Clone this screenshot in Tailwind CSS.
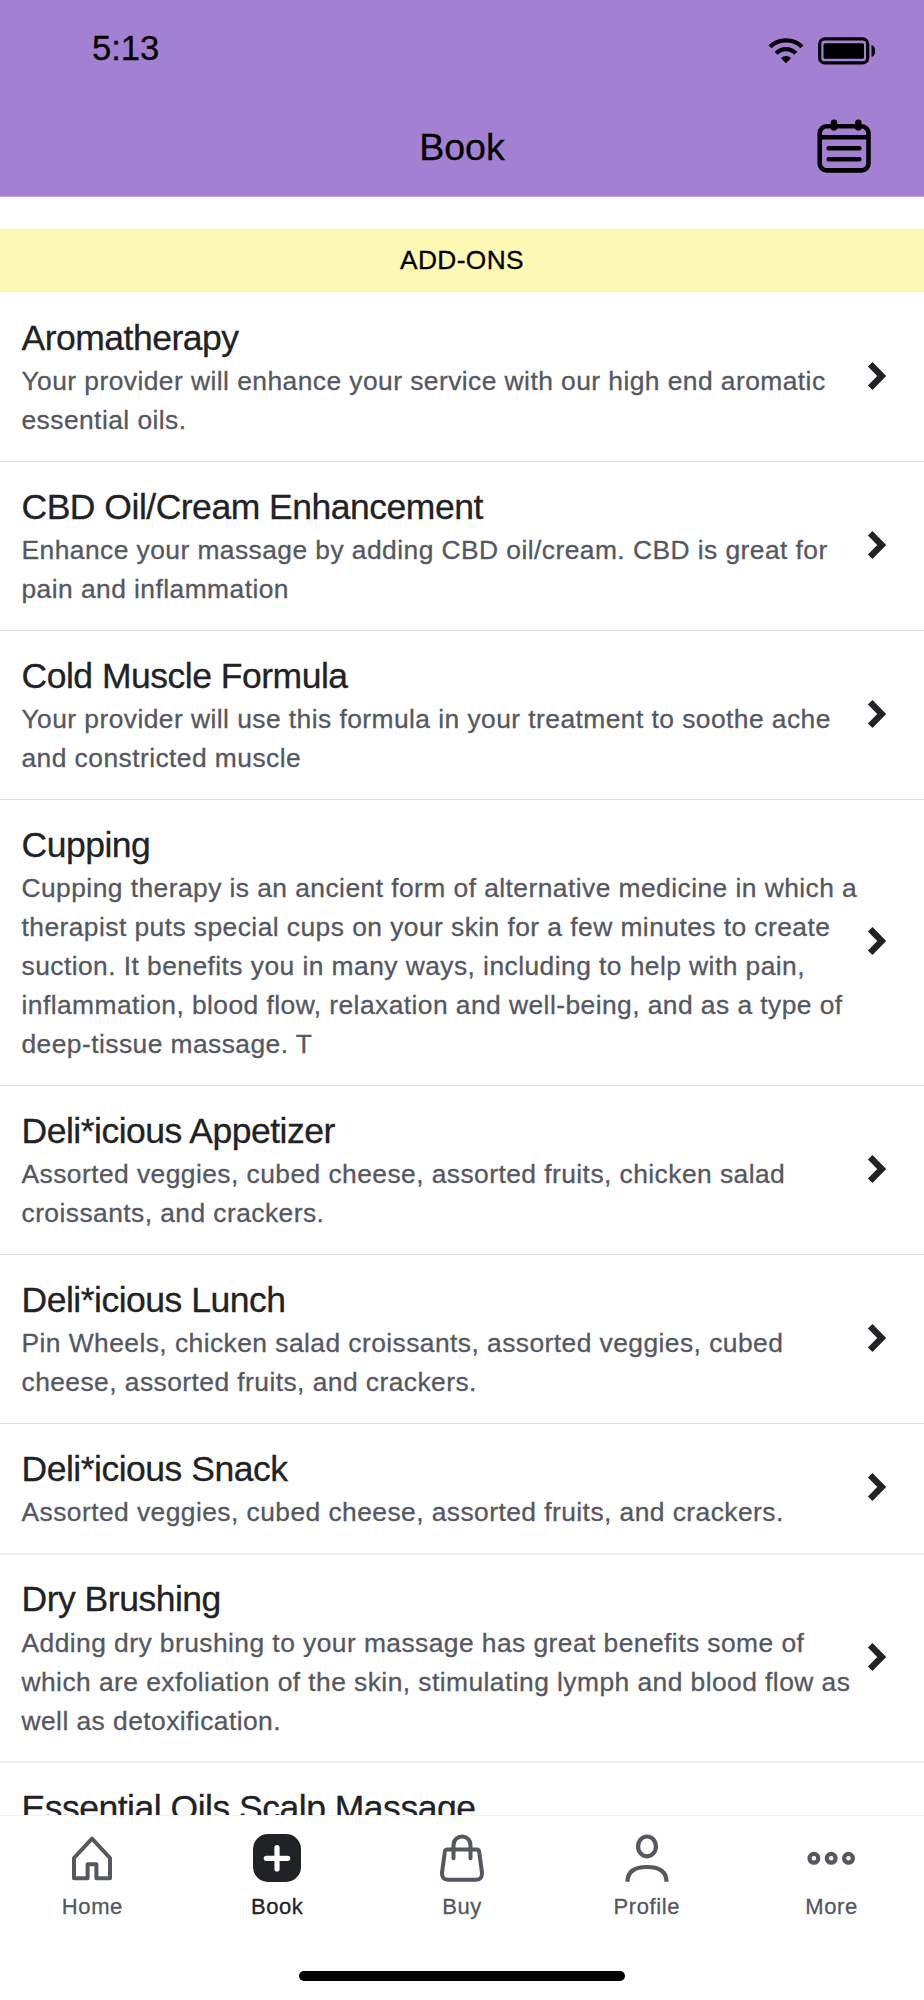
<!DOCTYPE html>
<html lang="en">
<head>
    <meta charset="UTF-8">
    <meta name="viewport" content="width=device-width, initial-scale=1.0">
    <title>Book</title>
    <script src="https://cdn.jsdelivr.net/npm/@tailwindcss/browser@4"></script>
</head>
<body class="bg-white font-['Liberation_Sans',Arial,sans-serif] text-[#212226] [-webkit-text-stroke:0.3px]">
    <div class="flex flex-col w-[924px] h-[2000px] overflow-hidden">
        <header class="shrink-0 h-[197px] bg-[#a480d2] border-b border-[#bfa5e0] text-black">
            <!-- Status bar -->
            <div class="flex items-center justify-between h-[98px] pl-[92px] pr-[48px]">
                <span class="pb-[3px] text-[34.6px] leading-10">5:13</span>
                <div class="flex items-center gap-[13.7px] pt-[3px]">
                    <svg width="36" height="28" viewBox="0 0 36 28" fill="none" stroke="#000" stroke-width="4.2">
                        <path d="M2 9.8C10.5 1.2 25.5 1.2 34 9.8" />
                        <path d="M8.2 16.4C13.6 10.8 22.4 10.8 27.8 16.4" />
                        <path d="M13 21.3C15.8 18.3 20.2 18.3 23 21.3L18 26.3Z" fill="#000" stroke="none" />
                    </svg>
                    <svg width="58" height="28" viewBox="0 0 58 28" fill="none">
                        <rect x="1.7" y="1.9" width="48" height="24" rx="5" stroke="#000" stroke-width="3.2" />
                        <rect x="5.5" y="6.2" width="40.5" height="15.5" rx="1.5" fill="#000" />
                        <path d="M53.5 8C58.4 9 58.4 19 53.5 20Z" fill="#000" />
                    </svg>
                </div>
            </div>
            <!-- Title bar -->
            <div class="grid grid-cols-3 items-center h-[98px] px-[52px]">
                <span></span>
                <h1 class="text-center text-[37.6px] leading-[44px]">Book</h1>
                <svg class="justify-self-end" width="56" height="56" viewBox="0 0 56 56" fill="none" stroke="#000" stroke-width="4.6" stroke-linecap="round">
                    <rect x="3.7" y="7.3" width="48.8" height="44.1" rx="7" />
                    <path d="M5 18.3H51" />
                    <path d="M12.7 29.3H43.3M12.7 40.3H43.3" />
                    <path d="M18 3.6V8.4M42.3 3.6V8.4" stroke-width="6.4" />
                </svg>
            </div>
        </header>

        <main class="flex-1 min-h-0 overflow-hidden pt-8">
            <h2 class="flex items-center justify-center h-[63px] bg-[#fef8b5] text-black text-[26.3px] tracking-[0.4px]">ADD-ONS</h2>
            <ul id="services" class="pt-px"></ul>
        </main>

        <nav class="shrink-0 h-[185px] border-t border-[#f2f2f3] text-[#555761] text-[22px] tracking-[0.6px] [font-variant-ligatures:none]">
            <div class="grid grid-cols-5 pt-[16.5px]">
                <a class="flex flex-col items-center gap-[12px]">
                    <svg width="50" height="50" viewBox="0 0 50 50" fill="none" stroke="currentColor" stroke-width="4" stroke-linejoin="round">
                        <path d="M25 5.7L43 25V45.3H29.4V31.2H20.6V45.3H7V25Z" />
                    </svg>
                    <span class="leading-6">Home</span>
                </a>
                <a class="flex flex-col items-center gap-[12px] text-[#212226]">
                    <svg width="50" height="50" viewBox="0 0 50 50" fill="none">
                        <rect x="1" y="1" width="48" height="48" rx="15" fill="currentColor" />
                        <path d="M25 14.6V36M14.3 25.3H35.7" stroke="#fff" stroke-width="5.2" stroke-linecap="round" />
                    </svg>
                    <span class="leading-6">Book</span>
                </a>
                <a class="flex flex-col items-center gap-[12px]">
                    <svg width="50" height="50" viewBox="0 0 50 50" fill="none" stroke="currentColor" stroke-width="4" stroke-linecap="round" stroke-linejoin="round">
                        <path d="M10.5 16.5H39.5Q41.9 16.5 42.2 18.9L45 39.7Q45.4 46.7 39 46.7H11Q4.6 46.7 5 39.7L7.8 18.9Q8.1 16.5 10.5 16.5Z" />
                        <path d="M16.5 25.2V12.4C16.5 0.6 33.5 0.6 33.5 12.4V25.2" />
                    </svg>
                    <span class="leading-6">Buy</span>
                </a>
                <a class="flex flex-col items-center gap-[12px]">
                    <svg width="50" height="50" viewBox="0 0 50 50" fill="none" stroke="currentColor" stroke-width="4.2">
                        <ellipse cx="25" cy="13.4" rx="8.9" ry="9.9" />
                        <path d="M5.5 48.8C5.5 38.5 12 34 25 34S44.5 38.5 44.5 48.8" />
                    </svg>
                    <span class="leading-6">Profile</span>
                </a>
                <a class="flex flex-col items-center gap-[12px]">
                    <svg width="50" height="50" viewBox="0 0 50 50" fill="none" stroke="currentColor" stroke-width="4.2">
                        <circle cx="6.9" cy="25.3" r="4.4" />
                        <circle cx="24.2" cy="25.3" r="4.4" />
                        <circle cx="41.5" cy="25.3" r="4.4" />
                    </svg>
                    <span class="leading-6">More</span>
                </a>
            </div>
            <div class="mx-auto mt-[52.5px] w-[326px] h-[10px] rounded-full bg-black"></div>
        </nav>
    </div>

    <script>
        const services = [
            { name: 'Aromatherapy', lines: ['Your provider will enhance your service with our high end aromatic', 'essential oils.'] },
            { name: 'CBD Oil/Cream Enhancement', lines: ['Enhance your massage by adding CBD oil/cream. CBD is great for', 'pain and inflammation'] },
            { name: 'Cold Muscle Formula', lines: ['Your provider will use this formula in your treatment to soothe ache', 'and constricted muscle'] },
            { name: 'Cupping', lines: ['Cupping therapy is an ancient form of alternative medicine in which a', 'therapist puts special cups on your skin for a few minutes to create', 'suction. It benefits you in many ways, including to help with pain,', 'inflammation, blood flow, relaxation and well-being, and as a type of', 'deep-tissue massage. T'] },
            { name: 'Deli*icious Appetizer', lines: ['Assorted veggies, cubed cheese, assorted fruits, chicken salad', 'croissants, and crackers.'] },
            { name: 'Deli*icious Lunch', lines: ['Pin Wheels, chicken salad croissants, assorted veggies, cubed', 'cheese, assorted fruits, and crackers.'] },
            { name: 'Deli*icious Snack', soft: true, lines: ['Assorted veggies, cubed cheese, assorted fruits, and crackers.'] },
            { name: 'Dry Brushing', soft: true, lines: ['Adding dry brushing to your massage has great benefits some of', 'which are exfoliation of the skin, stimulating lymph and blood flow as', 'well as detoxification.'] },
            { name: 'Essential Oils Scalp Massage', lines: ['', '', ''] }
        ];

        document.getElementById('services').innerHTML = services.map(service => `
            <li class="flex items-center justify-between pl-[21.5px] pr-[37px] pt-[23.5px] ${service.soft ? 'pb-[20.5px] border-b-2 border-[#ededee]' : 'pb-[21px] border-b border-[#dddde1]'}">
                <div>
                    <h3 class="text-[35.5px] leading-[43px] tracking-[-0.49px]">${service.name}</h3>
                    <p class="mt-[2.5px] text-[26.4px] leading-[39px] tracking-[0.44px] [font-variant-ligatures:none] text-[#555761] whitespace-nowrap">${service.lines.join('<br>')}</p>
                </div>
                <svg class="mb-[5px]" width="20" height="30" viewBox="0 0 20 30" fill="none" stroke="#212226" stroke-width="6.4">
                    <path d="M3.2 3.3L14.7 15L3.2 26.7" />
                </svg>
            </li>
        `).join('');
    </script>
</body>
</html>
